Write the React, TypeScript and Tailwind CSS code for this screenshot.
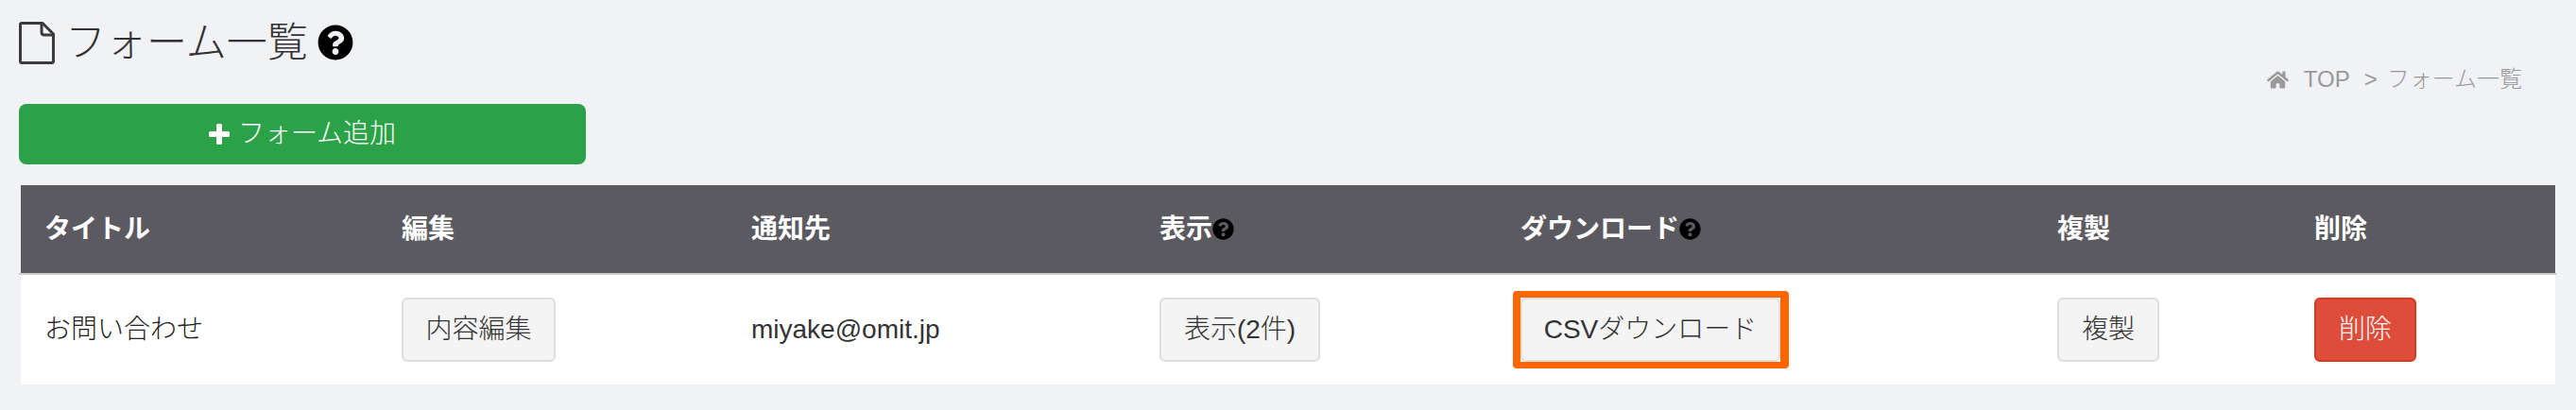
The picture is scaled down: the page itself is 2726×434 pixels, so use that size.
import { FaHome, FaQuestionCircle } from 'react-icons/fa'

const font = "font-['Liberation_Sans','Noto_Sans_CJK_JP',sans-serif]"
const cols = 'grid grid-cols-[378px_370px_432px_382px_568px_272px_274px] items-center'
const btn = 'flex h-[68px] items-center justify-center rounded-[6px] border-2 text-[28px] font-light whitespace-nowrap'
const plainBtn = `${btn} border-[#dedede] bg-[#f4f4f4] text-[#333]`

function FileIcon() {
  return (
    <svg width="38" height="45" viewBox="0 0 38 45" fill="none" stroke="#3b3b3b" strokeWidth="3" strokeLinejoin="round">
      <path d="M3 1.5H25L36.5 13V41.5Q36.5 43.5 34.5 43.5H3Q1.5 43.5 1.5 41.5V3Q1.5 1.5 3 1.5Z" />
      <path d="M24 2V11Q24 14 27 14H36" />
    </svg>
  )
}

function PlusIcon() {
  return (
    <svg width="22" height="22" viewBox="0 0 22 22" fill="white">
      <path d="M8 1.5Q8 0 9.5 0H12.5Q14 0 14 1.5V8H20.5Q22 8 22 9.5V12.5Q22 14 20.5 14H14V20.5Q14 22 12.5 22H9.5Q8 22 8 20.5V14H1.5Q0 14 0 12.5V9.5Q0 8 1.5 8H8Z" />
    </svg>
  )
}

export default function App() {
  return (
    <main className={`${font} min-h-screen bg-[#f0f2f6] px-[20px] pb-[27px] pt-[23px] text-[#333]`}>
      <div className="flex justify-between">
        <div>
          <h1 className="flex h-[44px] items-center text-[43px] font-light leading-none text-[#333]">
            <FileIcon />
            <span className="ml-[11px]">フォーム一覧</span>
            <FaQuestionCircle className="ml-[10px] text-black" size={38} />
          </h1>
          <button className="mt-[43px] flex h-[64px] w-[600px] items-center justify-center gap-[9px] rounded-[8px] bg-[#2ca248] text-[28px] font-light text-white">
            <PlusIcon />
            フォーム追加
          </button>
        </div>
        <nav className="mr-[37px] mt-[47px] flex h-[28px] items-center text-[24px] font-light text-[#999]">
          <FaHome size={23} />
          <span className="ml-[16px]">TOP</span>
          <span className="ml-[15px]">&gt;</span>
          <span className="ml-[10px]">フォーム一覧</span>
        </nav>
      </div>

      <section className="mt-[22px]">
        <div className={`${cols} mx-[2px] h-[93px] bg-[#5b5a60] text-[28px] font-bold text-white`}>
          <div className="pl-[25px]">タイトル</div>
          <div className="pl-[25px]">編集</div>
          <div className="pl-[25px]">通知先</div>
          <div className="flex items-center pl-[25px]">表示<FaQuestionCircle className="text-black" size={23} /></div>
          <div className="flex items-center pl-[25px]">ダウンロード<FaQuestionCircle className="text-black" size={23} /></div>
          <div className="pl-[25px]">複製</div>
          <div className="pl-[25px]">削除</div>
        </div>
        <div className="h-[2px] bg-[#cccccc]" />
        <div className={`${cols} mx-[2px] h-[116px] bg-white text-[28px] font-light text-[#222]`}>
          <div className="pl-[25px]">お問い合わせ</div>
          <div className="pl-[25px]"><button className={`${plainBtn} w-[163px]`}>内容編集</button></div>
          <div className="pl-[25px] font-normal text-[#333]">miyake@omit.jp</div>
          <div className="pl-[25px]"><button className={`${plainBtn} w-[170px]`}>表示(2件)</button></div>
          <div className="pl-[25px]">
            <div className="-ml-[8px] w-fit rounded-[4px] border-y-[7px] border-l-[8px] border-r-[9px] border-[#ff6600] bg-white">
              <button className={`${plainBtn} w-[275px]`}>CSVダウンロード</button>
            </div>
          </div>
          <div className="pl-[25px]"><button className={`${plainBtn} w-[108px]`}>複製</button></div>
          <div className="pl-[25px]">
            <button className={`${btn} w-[108px] border-[#d9381e] bg-[#de4c3a] text-white`}>削除</button>
          </div>
        </div>
      </section>
    </main>
  )
}
